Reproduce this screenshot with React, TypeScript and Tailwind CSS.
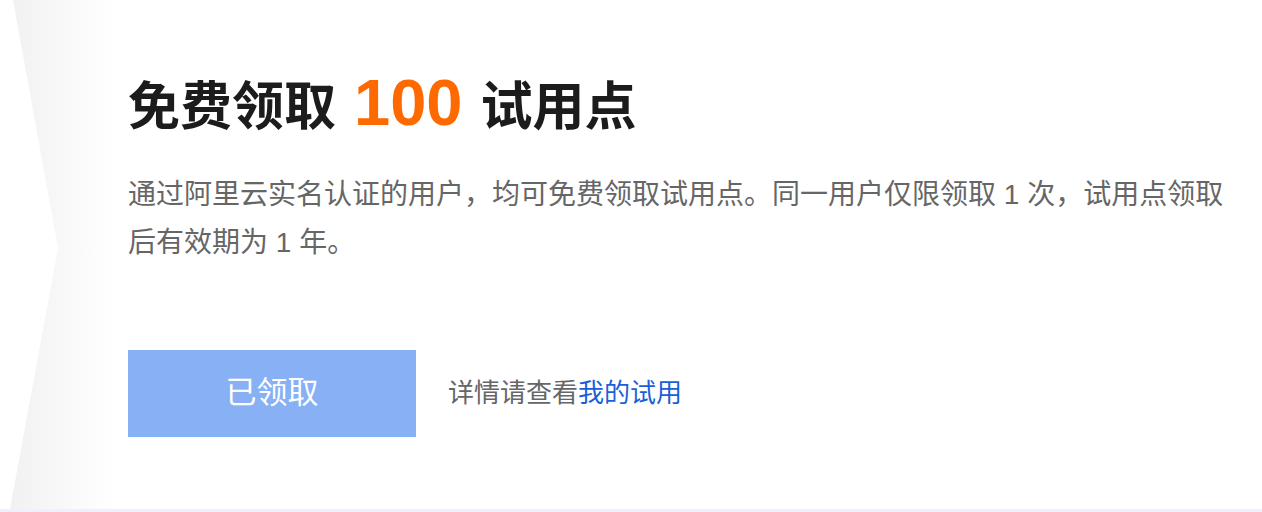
export default function App() {
  return (
    <div
      className="relative w-full h-[512px] bg-white overflow-hidden"
      style={{ fontFamily: '"Liberation Sans", "Noto Sans CJK SC", sans-serif' }}
    >
      {/* soft page-edge shadow on the left */}
      <svg
        className="absolute left-0 top-0 pointer-events-none"
        width="140"
        height="509"
        viewBox="0 0 140 509"
      >
        <defs>
          <linearGradient id="edge" x1="0" y1="0" x2="1" y2="0">
            <stop offset="0" stopColor="#f1f1f1" />
            <stop offset="0.4" stopColor="#f8f8f8" />
            <stop offset="0.8" stopColor="#ffffff" />
          </linearGradient>
        </defs>
        <polygon points="13,0 58,248 10,509 140,509 140,0" fill="url(#edge)" />
      </svg>

      <div className="relative flex flex-col h-[509px] pl-[128px] pr-[30px]">
        <h1 className="flex items-baseline mt-[70px] text-[52px] font-bold leading-none text-[#1c1c1c]">
          <span>免费领取</span>
          <span className="mx-[18px] text-[65px] text-[#ff6a00]">100</span>
          <span>试用点</span>
        </h1>

        <p className="mt-[36px] text-[28px] leading-[48px] text-[#666666] max-w-[1100px]">
          通过阿里云实名认证的用户，均可免费领取试用点。同一用户仅限领取 1 次，试用点领取后有效期为 1 年。
        </p>

        <div className="flex items-center gap-[32px] mt-[83px]">
          <button className="w-[288px] h-[87px] bg-[#88b0f5] text-white text-[31px]">
            已领取
          </button>
          <span className="text-[26px] text-[#666666]">
            详情请查看<a className="text-[#1a5fd8]">我的试用</a>
          </span>
        </div>
      </div>
      <div className="h-[3px] bg-[#eef0fb]" />
    </div>
  );
}
